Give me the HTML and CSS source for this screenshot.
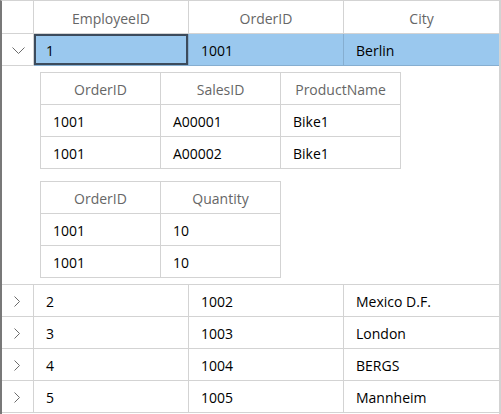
FILE: index.html
```html
<!DOCTYPE html>
<html>
<head>
<meta charset="utf-8">
<link rel="stylesheet" href="styles.css">
</head>
<body>
<div class="grid">
  <div class="row head">
    <div class="cell ind"></div>
    <div class="cell hc">EmployeeID</div>
    <div class="cell hc">OrderID</div>
    <div class="cell hc last">City</div>
  </div>
  <div class="row sel">
    <div class="cell ind"><svg class="chev-down" width="13" height="7" viewBox="0 0 13 7"><polyline points="0.5,0.5 6.5,6.5 12.5,0.5"/></svg></div>
    <div class="cell dc focus">1</div>
    <div class="cell dc">1001</div>
    <div class="cell dc last">Berlin</div>
  </div>
  <div class="detail">
    <div class="sub cols3">
      <div class="sc sh">OrderID</div><div class="sc sh">SalesID</div><div class="sc sh">ProductName</div>
      <div class="sc sd">1001</div><div class="sc sd">A00001</div><div class="sc sd">Bike1</div>
      <div class="sc sd">1001</div><div class="sc sd">A00002</div><div class="sc sd">Bike1</div>
    </div>
    <div class="sub cols2">
      <div class="sc sh">OrderID</div><div class="sc sh">Quantity</div>
      <div class="sc sd">1001</div><div class="sc sd">10</div>
      <div class="sc sd">1001</div><div class="sc sd">10</div>
    </div>
  </div>
  <div class="row">
    <div class="cell ind"><svg class="chev-right" width="7" height="11" viewBox="0 0 7 11"><polyline points="0.5,0.5 5.5,5.5 0.5,10.5"/></svg></div>
    <div class="cell dc">2</div>
    <div class="cell dc">1002</div>
    <div class="cell dc last">Mexico D.F.</div>
  </div>
  <div class="row">
    <div class="cell ind"><svg class="chev-right" width="7" height="11" viewBox="0 0 7 11"><polyline points="0.5,0.5 5.5,5.5 0.5,10.5"/></svg></div>
    <div class="cell dc">3</div>
    <div class="cell dc">1003</div>
    <div class="cell dc last">London</div>
  </div>
  <div class="row">
    <div class="cell ind"><svg class="chev-right" width="7" height="11" viewBox="0 0 7 11"><polyline points="0.5,0.5 5.5,5.5 0.5,10.5"/></svg></div>
    <div class="cell dc">4</div>
    <div class="cell dc">1004</div>
    <div class="cell dc last">BERGS</div>
  </div>
  <div class="row">
    <div class="cell ind"><svg class="chev-right" width="7" height="11" viewBox="0 0 7 11"><polyline points="0.5,0.5 5.5,5.5 0.5,10.5"/></svg></div>
    <div class="cell dc">5</div>
    <div class="cell dc">1005</div>
    <div class="cell dc last">Mannheim</div>
  </div>
</div>
</body>
</html>
```
FILE: styles.css
```css
html, body {
  margin: 0;
  padding: 0;
  background: #ffffff;
}
body {
  font-family: "Open Sans", "Noto Sans", sans-serif;
  font-size: 14px;
  color: #000000;
}
.grid {
  width: 501px;
  height: 414px;
  box-sizing: border-box;
  border-left: 2px solid #787878;
  border-top: 1px solid #d3d3d3;
  border-right: 2px solid #d3d3d3;
  overflow: hidden;
}
.row {
  display: grid;
  grid-template-columns: 32px 155px 155px 155px;
  height: 32px;
}
.row.head {
  height: 33px;
}
.cell {
  box-sizing: border-box;
  border-right: 1px solid #d3d3d3;
  border-bottom: 1px solid #d3d3d3;
  display: flex;
  align-items: center;
  white-space: nowrap;
  padding-top: 2px;
}
.cell.last {
  border-right: 0;
}
.hc {
  justify-content: center;
  color: #666666;
}
.dc {
  padding-left: 12px;
}
.ind {
  justify-content: center;
  padding-top: 0;
}
.ind svg {
  fill: none;
  stroke: #6b6b6b;
  stroke-width: 1;
}
.chev-down {
  margin-left: 1px;
  margin-top: 1px;
}
.chev-right {
  margin-top: 1px;
}
.sel .dc {
  background: #9ac8ee;
  border-color: #86aed0;
}
.focus {
  box-shadow: inset 0 0 0 2px #3c4b5c;
}
.detail {
  display: flex;
  flex-direction: column;
  align-items: flex-start;
  gap: 12px;
  padding: 6px 0 6px 38px;
  border-bottom: 1px solid #d3d3d3;
}
.sub {
  display: grid;
  border-top: 1px solid #d3d3d3;
  border-left: 1px solid #d3d3d3;
}
.cols3 {
  grid-template-columns: repeat(3, 120px);
}
.cols2 {
  grid-template-columns: repeat(2, 120px);
}
.sc {
  box-sizing: border-box;
  height: 32px;
  border-right: 1px solid #d3d3d3;
  border-bottom: 1px solid #d3d3d3;
  display: flex;
  align-items: center;
  white-space: nowrap;
  padding-top: 2px;
}
.sh {
  justify-content: center;
  color: #666666;
}
.sd {
  padding-left: 12px;
}
```
